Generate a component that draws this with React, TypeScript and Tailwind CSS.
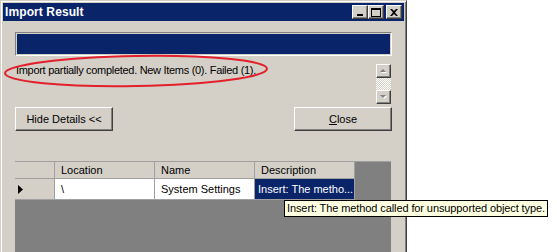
import { ReactNode } from "react"

const face = "bg-[#d4d0c8]"

function Btn3D({ children, className = "" }: { children: ReactNode; className?: string }) {
  return (
    <div
      className={`${face} flex items-center justify-center border border-t-white border-l-white border-r-[#404040] border-b-[#404040] shadow-[inset_-1px_-1px_#808080] ${className}`}
    >
      {children}
    </div>
  )
}

function TitleButton({ children, className = "" }: { children: ReactNode; className?: string }) {
  return (
    <div
      className={`${face} w-[16px] h-[14px] flex items-center justify-center border border-t-white border-l-white border-r-[#404040] border-b-[#404040] shadow-[inset_-1px_-1px_#808080] ${className}`}
    >
      {children}
    </div>
  )
}

function ScrollArrow({ up }: { up: boolean }) {
  return (
    <svg width="9" height="6" viewBox="0 0 9 6">
      {up ? (
        <>
          <polygon points="2,5 8,5 5,2" fill="#ffffff" />
          <polygon points="1,4 7,4 4,1" fill="#808080" />
        </>
      ) : (
        <>
          <polygon points="2,2 8,2 5,5" fill="#ffffff" />
          <polygon points="1,1 7,1 4,4" fill="#808080" />
        </>
      )}
    </svg>
  )
}

export default function App() {
  return (
    <div className="relative w-[557px] h-[252px] bg-white overflow-hidden font-['Liberation_Sans',Arial,sans-serif] text-[11px] leading-[13px] text-black">
      {/* window */}
      <div className={`w-[407px] h-[270px] ${face} border border-t-[#d4d0c8] border-l-[#d4d0c8] border-r-[#404040] border-b-[#404040] shadow-[inset_1px_1px_#ffffff,inset_-1px_-1px_#808080] p-[2px]`}>
        {/* title bar */}
        <div className="h-[18px] bg-[#0a246a] flex items-center pl-[2px] pr-[2px]">
          <span className="text-white font-bold text-[12px] tracking-[0.1px]">Import Result</span>
          <div className="ml-auto flex items-center">
            <TitleButton>
              <svg width="8" height="8" viewBox="0 0 8 8">
                <rect x="1" y="6" width="6" height="2" fill="#000" />
              </svg>
            </TitleButton>
            <TitleButton>
              <svg width="10" height="9" viewBox="0 0 10 9">
                <rect x="0.5" y="0.5" width="9" height="8" fill="none" stroke="#000" />
                <rect x="0" y="0" width="10" height="2" fill="#000" />
              </svg>
            </TitleButton>
            <TitleButton className="ml-[2px]">
              <svg width="8" height="7" viewBox="0 0 8 7">
                <path d="M0 0 L2 0 L4 2 L6 0 L8 0 L5 3.5 L8 7 L6 7 L4 5 L2 7 L0 7 L3 3.5 Z" fill="#000" />
              </svg>
            </TitleButton>
          </div>
        </div>

        {/* body */}
        <div className="px-[12px]">
          {/* progress bar */}
          <div className="mt-[11px] h-[24px] border border-t-[#808080] border-l-[#808080] border-r-white border-b-white p-[1px]">
            <div className="h-full bg-[#0a246a]" />
          </div>

          {/* message box */}
          <div className="mt-[7px] h-[41px] flex">
            <div className="flex-1 pl-[1px] pt-[1px] tracking-[-0.3px]">Import partially completed. New Items (0). Failed (1).</div>
            <div className="w-[15px] mr-[1px] pt-[1px] flex flex-col">
              <Btn3D className="h-[14px]">
                <ScrollArrow up />
              </Btn3D>
              <div className="h-[12px] bg-[repeating-conic-gradient(#d4d0c8_0_25%,#ffffff_0_50%)] bg-[length:2px_2px]" />
              <Btn3D className="h-[14px]">
                <ScrollArrow up={false} />
              </Btn3D>
            </div>
          </div>

          {/* buttons */}
          <div className="mt-[3px] flex justify-between">
            <Btn3D className="w-[98px] h-[24px]">Hide Details &lt;&lt;</Btn3D>
            <Btn3D className="w-[98px] h-[24px]">
              <span>
                <span className="underline">C</span>lose
              </span>
            </Btn3D>
          </div>

          {/* grid */}
          <div className="mt-[30px] w-[376px] h-[100px] bg-[#808080] border-t border-[#a0a0a0]">
            <div className="flex h-[17px]">
              <div className={`w-[40px] ${face} border-r border-b border-[#a0a0a0]`} />
              {["Location", "Name", "Description"].map((h) => (
                <div key={h} className={`w-[100px] ${face} border-r border-b border-[#a0a0a0] pl-[6px] flex items-center`}>
                  {h}
                </div>
              ))}
            </div>
            <div className="flex h-[21px]">
              <div className={`w-[40px] ${face} border-r border-b border-[#a0a0a0] pl-[3px] flex items-center`}>
                <svg width="6" height="9" viewBox="0 0 6 9">
                  <polygon points="0,0 5,4.5 0,9" fill="#000" />
                </svg>
              </div>
              <div className="w-[100px] bg-white border-r border-b border-[#a0a0a0] pl-[6px] flex items-center">\</div>
              <div className="w-[100px] bg-white border-r border-b border-[#a0a0a0] pl-[6px] flex items-center">System Settings</div>
              <div className="w-[100px] bg-[#0a246a] text-white border-r border-b border-[#a0a0a0] pl-[3px] flex items-center">Insert: The metho...</div>
            </div>
          </div>
        </div>
      </div>

      {/* red annotation ellipse */}
      <svg className="absolute left-0 top-0 pointer-events-none" width="300" height="100" viewBox="0 0 300 100">
        <ellipse cx="136" cy="71" rx="131" ry="15" fill="none" stroke="#e3202a" strokeWidth="2" transform="rotate(-1 136 71)" />
      </svg>

      {/* tooltip */}
      <div className="absolute left-[284px] top-[200px] h-[17px] bg-[#ffffe1] border border-black px-[2px] flex items-center whitespace-nowrap tracking-[-0.1px]">
        Insert: The method called for unsupported object type.
      </div>
    </div>
  )
}
